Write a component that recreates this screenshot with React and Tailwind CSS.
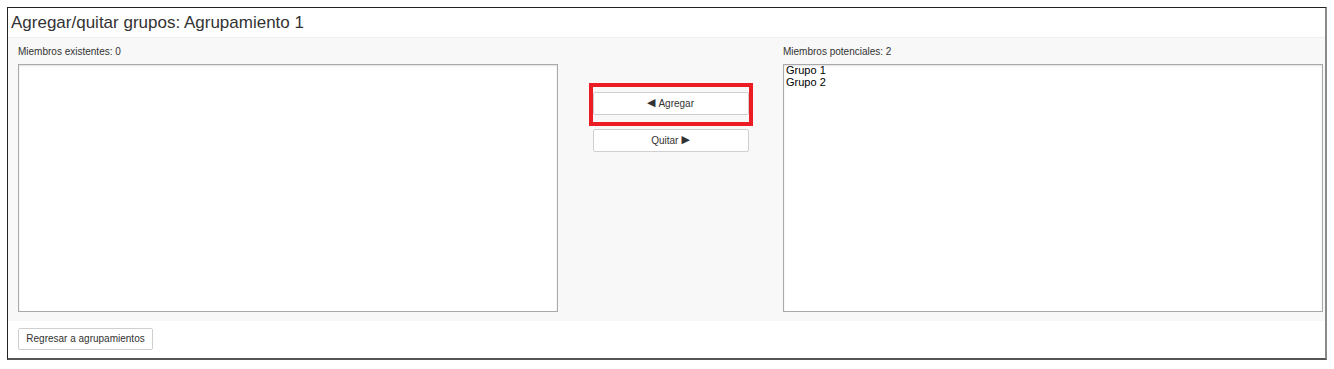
import React from "react";

function ListBox({ items = [] }) {
  return (
    <div className="h-[248px] bg-white border border-[#a9a9a9] shadow-[inset_0_1px_2px_rgba(0,0,0,0.12)] px-[2px]">
      {items.map((it) => (
        <div key={it} className="text-[11px] leading-[12px] text-black relative -top-[1px]">
          {it}
        </div>
      ))}
    </div>
  );
}

function Btn({ children, className = "" }) {
  return (
    <button
      className={`h-[23px] w-[156px] bg-white border border-[#cfcfcf] rounded-[2px] text-[10px] text-[#333] flex items-center justify-center gap-[3px] ${className}`}
    >
      {children}
    </button>
  );
}

export default function App() {
  return (
    <div className="bg-white min-h-[369px] pt-[7px] px-[7px]" style={{ fontFamily: '"Liberation Sans", Arial, sans-serif' }}>
      <div className="h-[353px] border border-[#222] border-r-2 border-r-[#8a8a8a] border-b-2 border-b-[#555] flex flex-col">
        <h2 className="h-[29px] pl-[3px] pt-[4px] text-[17px] leading-[22px] text-[#333] font-normal">
          Agregar/quitar grupos: Agrupamiento 1
        </h2>

        <div className="bg-[#f8f8f8] border-t border-[#efefef] pl-[10px] pr-[2px] pt-[7px] pb-[9px] grid grid-cols-[540px_1fr_540px]">
          <div>
            <div className="text-[10px] leading-[14px] text-[#333] mb-[5px]">Miembros existentes: 0</div>
            <ListBox />
          </div>

          <div className="flex flex-col items-center pt-[47px]">
            <div className="relative">
              <Btn>
                <span className="text-[11px]" style={{ fontFamily: '"DejaVu Sans", sans-serif' }}>◀</span>
                <span>Agregar</span>
              </Btn>
              <div className="absolute left-[-4px] right-[-4px] top-[-9px] bottom-[-11px] border-[4px] border-[#ec1c24] pointer-events-none" />
            </div>
            <Btn className="mt-[14px]">
              <span>Quitar</span>
              <span className="text-[11px]" style={{ fontFamily: '"DejaVu Sans", sans-serif' }}>▶</span>
            </Btn>
          </div>

          <div>
            <div className="text-[10px] leading-[14px] text-[#333] mb-[5px]">Miembros potenciales: 2</div>
            <ListBox items={["Grupo 1", "Grupo 2"]} />
          </div>
        </div>

        <div className="pl-[10px] pt-[4px]">
          <button className="h-[22px] w-[135px] bg-white border border-[#cfcfcf] rounded-[2px] text-[10px] text-[#333]">
            Regresar a agrupamientos
          </button>
        </div>
      </div>
    </div>
  );
}
